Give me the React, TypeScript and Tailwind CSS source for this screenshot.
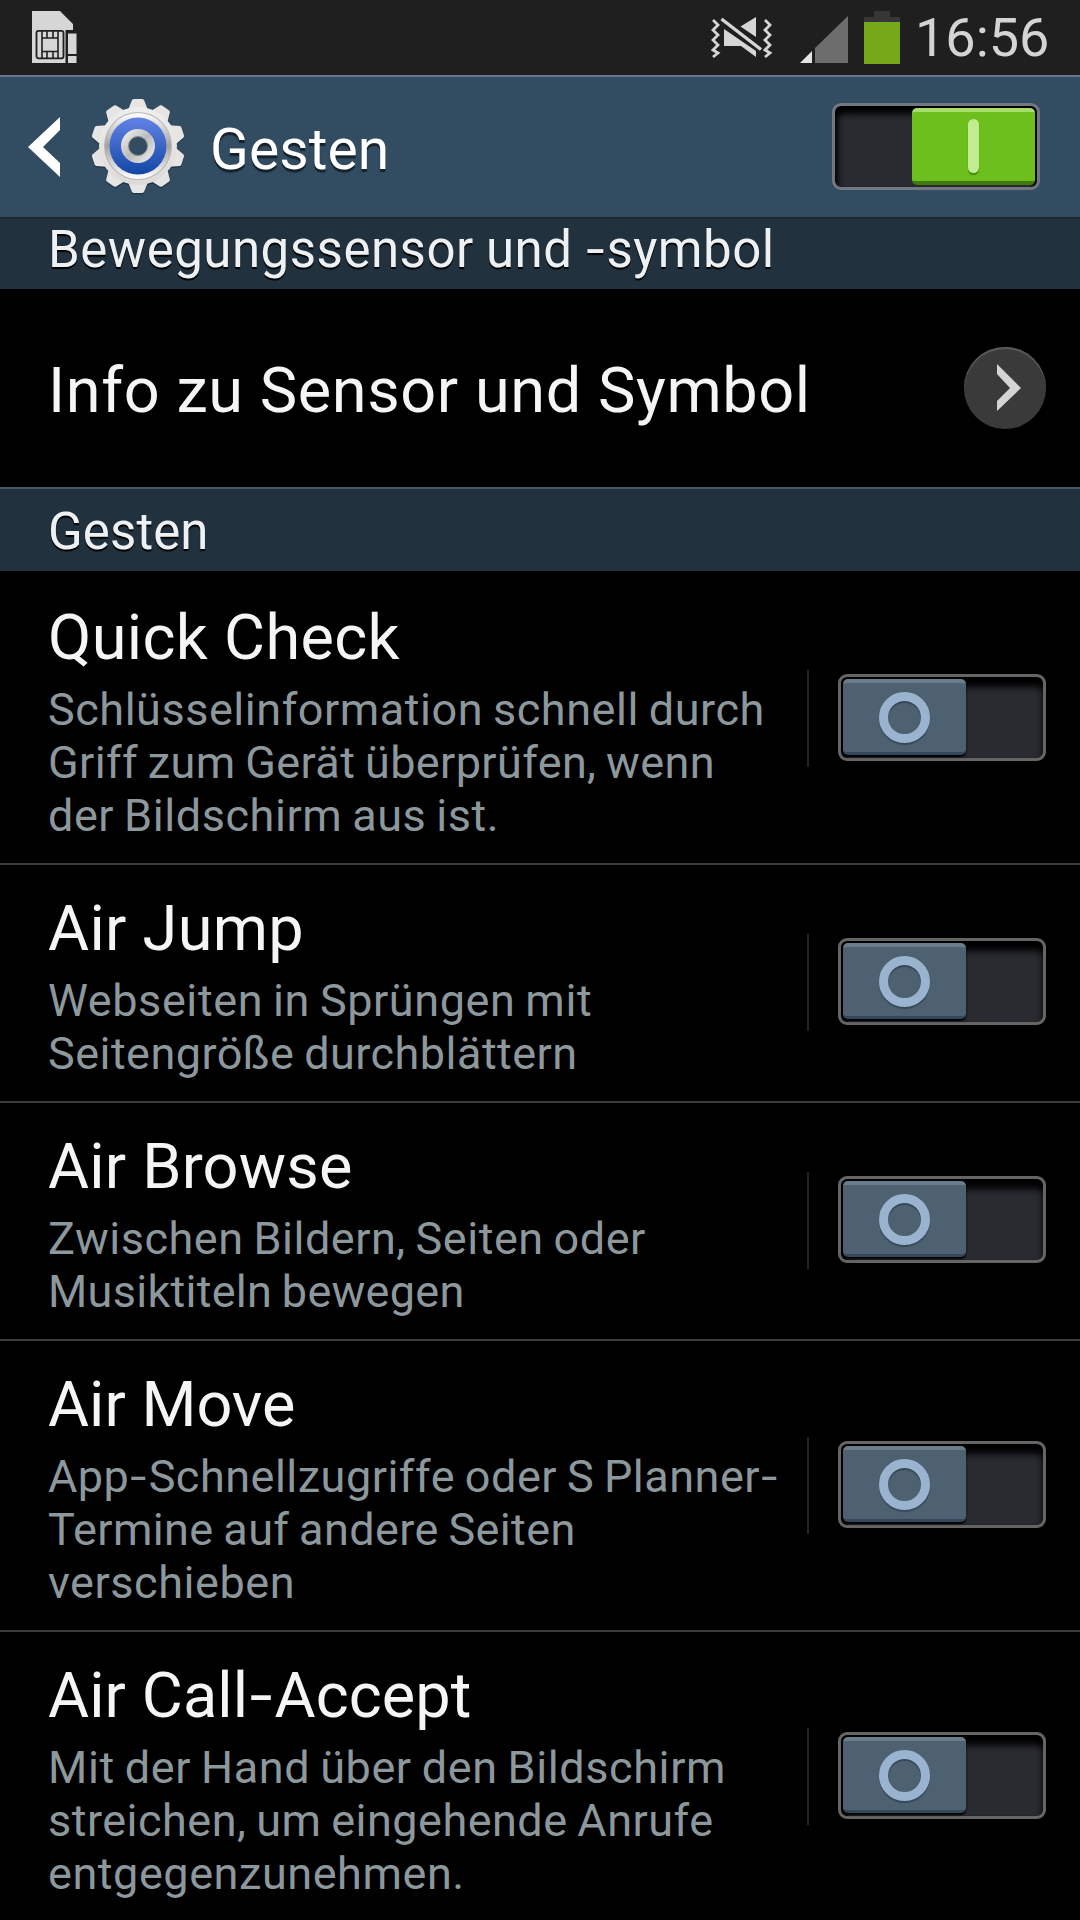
import { Fragment } from "react";

const rows = [
  {
    title: "Quick Check",
    tracking: "tracking-[0.35px]",
    lines: [
      { text: "Schlüsselinformation schnell durch", tracking: "tracking-[0.53px]" },
      { text: "Griff zum Gerät überprüfen, wenn", tracking: "tracking-[0.38px]" },
      { text: "der Bildschirm aus ist.", tracking: "tracking-[0.56px]" },
    ],
  },
  {
    title: "Air Jump",
    tracking: "tracking-[0.3px]",
    lines: [
      { text: "Webseiten in Sprüngen mit", tracking: "tracking-[0.58px]" },
      { text: "Seitengröße durchblättern", tracking: "tracking-[0.46px]" },
    ],
  },
  {
    title: "Air Browse",
    tracking: "tracking-[0.2px]",
    lines: [
      { text: "Zwischen Bildern, Seiten oder", tracking: "tracking-[0.52px]" },
      { text: "Musiktiteln bewegen", tracking: "tracking-[0.28px]" },
    ],
  },
  {
    title: "Air Move",
    tracking: "tracking-normal",
    lines: [
      { text: "App-Schnellzugriffe oder S Planner-", tracking: "tracking-[0.5px]" },
      { text: "Termine auf andere Seiten", tracking: "tracking-[0.38px]" },
      { text: "verschieben", tracking: "tracking-[0.56px]" },
    ],
  },
  {
    title: "Air Call-Accept",
    tracking: "tracking-[0.1px]",
    lines: [
      { text: "Mit der Hand über den Bildschirm", tracking: "tracking-[0.6px]" },
      { text: "streichen, um eingehende Anrufe", tracking: "tracking-[0.48px]" },
      { text: "entgegenzunehmen.", tracking: "tracking-[0.56px]" },
    ],
  },
];

// Draws hyphens a little wider, with some room on both sides.
function Spaced({ text }: { text: string }) {
  return (
    <>
      {text.split("-").map((part, i) => (
        <Fragment key={i}>
          {i > 0 && <span className="inline-block scale-x-130 px-[0.07em]">-</span>}
          {part}
        </Fragment>
      ))}
    </>
  );
}

function SimIcon() {
  return (
    <svg width="46" height="54" viewBox="0 0 46 54">
      <path d="M0 0H28L41 13V19H34V52H0Z" fill="#d6d6d6" />
      <rect x="4.5" y="19.8" width="27" height="27.5" rx="2" fill="#d6d6d6" stroke="#1f1f1f" strokeWidth="1.8" />
      <path
        d="M10 20V47M26 20V47M10 27H26M10 40.5H26M15 20V27M21 20V27M15 40.5V47M21 40.5V47"
        stroke="#1f1f1f"
        strokeWidth="1.6"
        fill="none"
      />
      <path d="M33.5 19H46V54H33.5Z" fill="#1f1f1f" />
      <path d="M36 22.5H44.5V43H36ZM36 45H44.5V52H36Z" fill="#d6d6d6" />
    </svg>
  );
}

function MuteIcon() {
  return (
    <svg width="62" height="44" viewBox="0 0 62 44" fill="none">
      <path
        d="M2 3L7 8L2 13L7 18L2 23L7 28L2 33L7 36L2 40M54 3L59 8L54 13L59 18L54 23L59 28L54 33L59 36L54 40"
        stroke="#d6d6d6"
        strokeWidth="2.8"
      />
      <path d="M45 0V20L29.5 9.5ZM13 12L45 34V40L30 29H13Z" fill="#d6d6d6" />
      <path d="M11 2L50 32" stroke="#1f1f1f" strokeWidth="7" />
      <path d="M10.5 2L50 32.5" stroke="#d6d6d6" strokeWidth="3.4" />
    </svg>
  );
}

function SignalIcon() {
  return (
    <svg width="48" height="48" viewBox="0 0 48 48">
      <path d="M48 0V47H15V32Z" fill="#6d6d6d" />
      <path d="M12 35V47H0Z" fill="#e4e4e4" />
    </svg>
  );
}

function BatteryIcon() {
  return (
    <svg width="36" height="53" viewBox="0 0 36 53">
      <path d="M10 0H26V6H36V12H0V6H10Z" fill="#363636" />
      <path d="M0 11H36V53H0Z" fill="#76a91a" />
    </svg>
  );
}

function GearIcon() {
  const teeth = [0, 36, 72, 108, 144, 180, 216, 252, 288, 324];
  return (
    <svg width="96" height="98" viewBox="-48 -48 96 98">
      <defs>
        <linearGradient id="gearBody" x1="0" y1="0" x2="0" y2="1">
          <stop offset="0" stopColor="#eeeeee" />
          <stop offset="1" stopColor="#dddbd9" />
        </linearGradient>
        <linearGradient id="gearBlue" x1="0" y1="0" x2="0" y2="1">
          <stop offset="0" stopColor="#6482e6" />
          <stop offset="1" stopColor="#1247a6" />
        </linearGradient>
        <linearGradient id="gearHub" x1="0" y1="0" x2="1" y2="1">
          <stop offset="0" stopColor="#f8f8f8" />
          <stop offset="0.5" stopColor="#bcbcbc" />
          <stop offset="1" stopColor="#f4f4f4" />
        </linearGradient>
        <linearGradient id="gearRim" x1="0" y1="0" x2="0" y2="1">
          <stop offset="0" stopColor="#ffffff" />
          <stop offset="0.5" stopColor="#a2a2a2" />
          <stop offset="1" stopColor="#ffffff" />
        </linearGradient>
      </defs>
      <g fill="#22384a" transform="translate(0 1.5)">
        <circle r="39" />
        {teeth.map((a) => (
          <path key={a} d="M-10 -36L-6 -46Q-5 -47 -4 -47H4Q5 -47 6 -46L10 -36Z" transform={`rotate(${a})`} />
        ))}
      </g>
      <g fill="#e6e5e4">
        {teeth.map((a) => (
          <path key={a} d="M-10 -36L-6 -46Q-5 -47 -4 -47H4Q5 -47 6 -46L10 -36Z" transform={`rotate(${a})`} />
        ))}
      </g>
      <circle r="39" fill="url(#gearBody)" />
      <circle r="34" fill="#b9b6b4" />
      <circle r="33" fill="url(#gearRim)" />
      <circle r="28.5" fill="url(#gearBlue)" />
      <circle r="17" fill="url(#gearHub)" />
      <circle r="9.5" fill="#324c61" stroke="#8b8b8b" strokeWidth="1" />
    </svg>
  );
}

function ToggleOn() {
  return (
    <div className="flex h-[87px] w-[208px] justify-end rounded-[9px] border-[3px] border-[#737880] bg-[#292b30] pt-[2px] pr-[2px] shadow-[inset_3px_8px_6px_#000,inset_-2px_0_1px_#000]">
      <div className="flex h-[77px] w-[123px] items-center justify-center rounded-[5px] border-t-4 border-b-4 border-t-[#a8dc6d] border-b-[#3f7a0c] bg-[#6cbf1d]">
        <div className="h-[54px] w-[11px] rounded-full bg-[#c1ec8f] shadow-[0_2px_1px_#468b12]" />
      </div>
    </div>
  );
}

function ToggleOff() {
  return (
    <div className="flex h-[87px] w-[208px] rounded-[9px] border-[3px] border-[#656565] bg-[#2a2b31] pt-[2px] pl-[2px] shadow-[inset_0_10px_7px_#000,inset_3px_0_1px_#000]">
      <div className="flex h-[76px] w-[123px] items-center justify-center rounded-[5px] border-t-4 border-b-3 border-t-[#6b7c8b] border-b-[#35475a] bg-[#4e6171] shadow-[0_2px_2px_#000]">
        <div className="size-[51px] rounded-full border-[9px] border-[#9ab4d0] shadow-[0_2px_1px_#34485a,inset_0_2px_1px_#34485a]" />
      </div>
    </div>
  );
}

export default function App() {
  return (
    <div className="flex h-[1920px] w-[1080px] flex-col overflow-hidden bg-black font-['Roboto',sans-serif] text-[#f5f5f5]">
      <div className="flex h-[75px] shrink-0 items-start bg-[#1f1f1f] pl-8">
        <div className="pt-[11px]">
          <SimIcon />
        </div>
        <div className="ml-auto flex pr-[30px]">
          <div className="mr-[27px] pt-[17px]">
            <MuteIcon />
          </div>
          <div className="mr-4 pt-4">
            <SignalIcon />
          </div>
          <div className="pt-[11px]">
            <BatteryIcon />
          </div>
          <div className="ml-[15px] w-[135px] pt-[8px] text-[54px] leading-[60px] whitespace-nowrap text-[#d4d4d4]">16:56</div>
        </div>
      </div>

      <header className="flex h-[142px] shrink-0 items-center border-t-2 border-[#667888] bg-[#324c61] pr-[40px] pl-[28px]">
        <svg width="33" height="60" viewBox="0 0 33 60">
          <path d="M32 0V13L15 30L32 46V60L0 30Z" fill="#fff" />
        </svg>
        <div className="ml-[29px]">
          <GearIcon />
        </div>
        <h1 className="ml-[24px] pt-[5px] text-[57px] leading-[68px] tracking-[0.1px] text-white [text-shadow:0_3px_1px_#15222c]">
          Gesten
        </h1>
        <div className="mb-[2px] ml-auto">
          <ToggleOn />
        </div>
      </header>

      <div className="h-[72px] shrink-0 border-t-2 border-[#1b2935] bg-[#21323e] pl-12 text-[51px] leading-[62px] tracking-[0.5px] whitespace-nowrap text-[#eef1f3] [text-shadow:0_2px_1px_#000] [word-spacing:-1px]">
        <Spaced text="Bewegungssensor und -symbol" />
      </div>

      <div className="flex h-[198px] shrink-0 items-center justify-between pr-[34px] pl-12">
        <div className="pt-[5px] text-[63px] leading-[74px] tracking-[0.6px] whitespace-nowrap">Info zu Sensor und Symbol</div>
        <div className="flex size-[82px] items-center justify-center rounded-full bg-[#3a3a3a] pl-[7px] shadow-[inset_0_2px_1px_#5c5c5c]">
          <svg width="26" height="48" viewBox="0 0 26 48">
            <path d="M1 0L25 24L1 47V37L14 24L1 10Z" fill="#d4d4d4" />
          </svg>
        </div>
      </div>

      <div className="h-[84px] shrink-0 border-t-2 border-[#475561] bg-[#21323e] pl-12 text-[51px] leading-[86px] tracking-[0.1px] text-[#eef1f3] [text-shadow:0_2px_1px_#000]">
        Gesten
      </div>

      <div className="pt-[3px]">
        {rows.map((row) => (
          <div key={row.title} className="flex items-center border-b-2 border-[#3d3d3d] pr-[34px] pl-12">
            <div className="pt-[27px] pb-[21px] whitespace-nowrap">
              <div className={`mb-[8px] text-[63px] leading-[74px] ${row.tracking}`}>
                <Spaced text={row.title} />
              </div>
              {row.lines.map((line) => (
                <div
                  key={line.text}
                  className={`text-[45px] leading-[53px] text-[#8d989d] [word-spacing:-1.8px] ${line.tracking}`}
                >
                  <Spaced text={line.text} />
                </div>
              ))}
            </div>
            <div className="mr-[29px] mb-[1px] ml-auto h-[97px] w-[2px] bg-[#232323]" />
            <div className="mb-[3px]">
              <ToggleOff />
            </div>
          </div>
        ))}
      </div>
    </div>
  );
}
